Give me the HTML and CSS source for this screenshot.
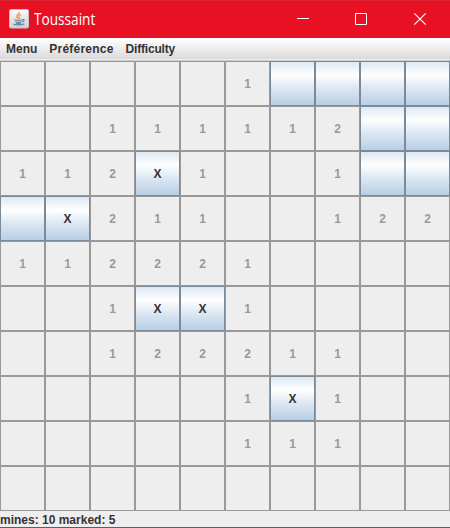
FILE: index.html
```html
<!DOCTYPE html>
<html lang="fr">
<head>
<meta charset="utf-8">
<title>Toussaint</title>
<link rel="stylesheet" href="styles.css">
</head>
<body>
<div class="window">
  <header class="titlebar">
    <svg class="app-icon" width="20" height="20" viewBox="0 0 20 20">
      <defs><linearGradient id="tile" x1="0" y1="0" x2="0" y2="1"><stop offset="0" stop-color="#fafafa"/><stop offset="1" stop-color="#ccd3d7"/></linearGradient></defs>
      <rect x=".5" y=".5" width="19" height="18.5" rx="1.5" fill="url(#tile)" stroke="#c4c4c4"/>
      <path d="M10.3 3c.6 1.700-3.300 2.800-2.500 4.800.3.800 1 1.300 1.400 2M12 5.700c-1.500.6-2.700 1.400-1.800 2.600.5.700.2 1.200-.2 1.600" fill="none" stroke="#e8934a" stroke-width="1.300"/>
      <path d="M5.500 10.700c2 .8 6 .7 8 0M6.300 12.800c2 .7 4.700.7 6.500 0M13.500 10.700c2.300-.7 2 1.600-.2 2.200M4.300 15c1.700 1.300 9 1.200 11-.2M7 14.300c1.500.5 3.500.5 5 0" fill="none" stroke="#66879f" stroke-width="1.200"/>
    </svg>
    <span class="title">Toussaint</span>
    <div class="controls">
      <svg width="58" height="38" viewBox="0 0 58 38"><path d="M17 18.500h12" stroke="#fff"/></svg>
      <svg width="58" height="38" viewBox="0 0 58 38"><path d="M17.500 13.500h11v11h-11z" fill="none" stroke="#fff"/></svg>
      <svg width="54" height="38" viewBox="0 0 54 38"><path d="M18.300 13.300l11.400 11.400M29.700 13.300l-11.400 11.400" stroke="#fff" stroke-width="1.100"/></svg>
    </div>
  </header>
  <nav class="menubar"><span>Menu</span><span class="wide">Préférence</span><span class="tight">Difficulty</span></nav>
  <main class="board" id="board"></main>
  <footer class="status">mines: 10 marked: 5</footer>
</div>
<script src="board.js"></script>
</body>
</html>
```
FILE: styles.css
```css
* { box-sizing: border-box; }
body { margin: 0; font-family: "Liberation Sans", Arial, sans-serif; font-variant-ligatures: none; }
.window { width: 450px; height: 528px; display: flex; flex-direction: column; overflow: hidden; background: #eee; border-bottom: 1px solid #cf2b3b; }
.titlebar { height: 38px; flex: none; display: flex; align-items: center; padding-left: 9px; background: #e81123; box-shadow: inset 0 1px #dc2536; color: #fff; }
.app-icon { flex: none; margin-top: -1px; }
.title { margin-left: 5px; font: 15.5px/22px "Open Sans", "Noto Sans", sans-serif; transform: scaleX(.88); transform-origin: left; }
.controls { display: flex; margin-left: auto; }
.controls svg { display: block; }
.menubar { height: 23px; flex: none; display: flex; gap: 12px; padding-left: 6px; font-size: 12px; font-weight: bold; line-height: 22px; color: #333; background: linear-gradient(#fff, #dadada 21px, #eee 21px, #eee 22px, #ccc 22px); }
.wide { letter-spacing: .22px; }
.tight { letter-spacing: -.2px; }
.board { flex: none; display: grid; grid-template-columns: repeat(10, 45px); grid-auto-rows: 45px; }
.cell { display: flex; align-items: center; justify-content: center; border: 1px solid #999; font-size: 12px; font-weight: bold; line-height: 14px; color: #999; }
.covered { border-color: #7a8a99; color: #333; background: linear-gradient(#dde8f3, #fff 30%, #dde8f3 60%, #b8cfe5); }
.status { height: 16px; font-size: 12px; font-weight: bold; line-height: 18px; color: #333; }
```
FILE: board.js
```js
// "." open cell, "#" covered cell, "X" marked cell, digit: neighbouring mines
const rows = [
  ".....1####",
  "..111112##",
  "112X1..1##",
  "#X211..122",
  "112221....",
  "..1XX1....",
  "..122211..",
  ".....1X1..",
  ".....111..",
  ".........."
];
const board = document.getElementById("board");
for (const row of rows) {
  for (const mark of row) {
    const cell = document.createElement("div");
    cell.className = "#X".includes(mark) ? "cell covered" : "cell";
    cell.textContent = ".#".includes(mark) ? "" : mark;
    board.append(cell);
  }
}
```
